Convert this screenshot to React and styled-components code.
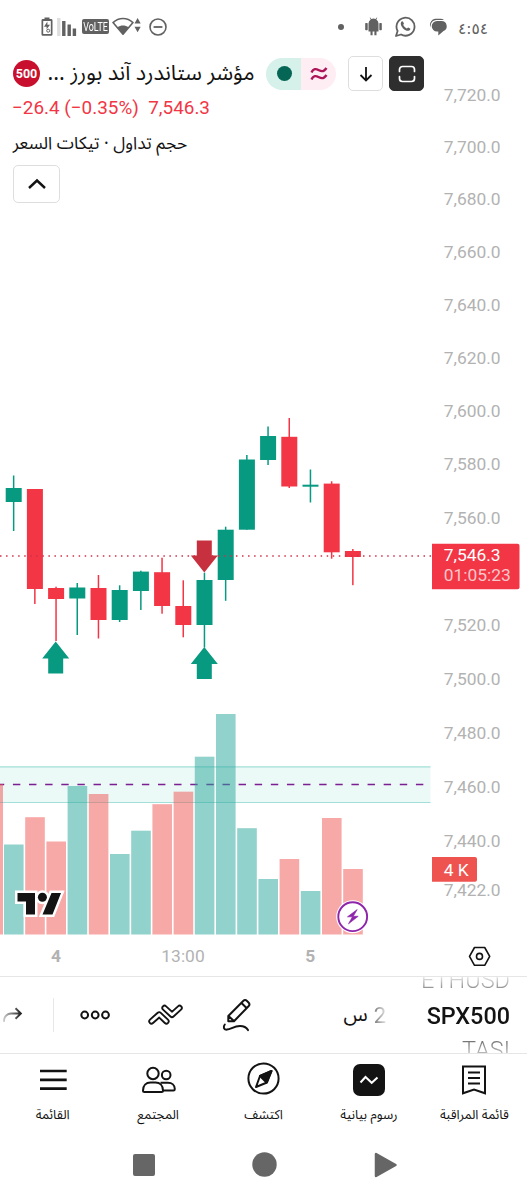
import React from "react";
import styled, { createGlobalStyle } from "styled-components";


const GlobalStyle = createGlobalStyle`
  * {
    box-sizing: border-box;
  }

  body {
    margin: 0;
    background: #ffffff;
    font-family: Roboto, "DejaVu Sans", sans-serif;
    color: #131313;
  }

  svg {
    display: block;
    flex: none;
  }
`;


/* candle: [up, high, bodyTop, bodyBottom, low] */
const candles = [
  [true, 475.5, 488, 502, 531],
  [false, 489, 489, 589, 604],
  [false, 586.7, 588, 599, 641],
  [true, 583, 587.5, 598.5, 635],
  [false, 575, 588, 620, 638.5],
  [true, 585.3, 590, 620, 622],
  [true, 570.7, 571.6, 591, 610],
  [false, 557.7, 572.2, 606, 613.7],
  [false, 580.3, 606, 625, 637.3],
  [true, 572.7, 580, 625, 647.5],
  [true, 526.7, 529.7, 580, 600.8],
  [true, 455, 459.5, 529.7, 529.7],
  [true, 426.5, 436, 460, 465],
  [false, 418, 436.8, 486.5, 488],
  [true, 469.5, 484.7, 486.7, 502.5],
  [false, 481.3, 483.6, 552.3, 558.7],
  [false, 549, 551, 557, 585.2],
];

const volumes = [
  844.5, 817.2, 841.5, 786, 794, 854, 830.7, 804.2, 791.7,
  756.7, 714, 828.2, 879, 859, 891, 818, 869,
];

const volumeUp = [
  true, false, false, true, false, true, true, false, false,
  true, true, true, true, false, true, false, false,
];

const prices = [
  ["7,720.0", 94.7], ["7,700.0", 146.7], ["7,680.0", 199.2], ["7,660.0", 252],
  ["7,640.0", 305.2], ["7,620.0", 358], ["7,600.0", 411.2], ["7,580.0", 464],
  ["7,560.0", 517.7], ["7,520.0", 625.2], ["7,500.0", 679], ["7,480.0", 732.7],
  ["7,460.0", 786.7], ["7,440.0", 841], ["7,422.0", 890],
];

const CHART_TOP = 50;
const candleX = i => 13.6 + i * 21.2;


const Screen = styled.div`
  width: 527px;
  height: 1200px;
  overflow: hidden;
  display: flex;
  flex-direction: column;
`;

const StatusBar = styled.div`
  height: 50px;
  padding: 3px 40px 0 41px;
  display: flex;
  align-items: center;
  justify-content: space-between;
  color: #616161;
`;

const StatusGroup = styled.div`
  display: flex;
  align-items: center;
`;

const Gap = styled.span`
  width: ${props => props.size}px;
`;

const VoLte = styled.span`
  width: 27px;
  height: 15px;
  border-radius: 2px;
  background: #616161;
  color: #ffffff;
  display: flex;
  justify-content: center;
  line-height: 16px;

  & span {
    font-size: 12px;
    transform: scaleX(0.74);
  }
`;

const Clock = styled.span`
  width: 29px;
  padding-top: 5px;
  font-family: "DejaVu Sans", sans-serif;
  font-size: 15.5px;
  white-space: nowrap;
  direction: ltr;
  unicode-bidi: bidi-override;
`;

const ChartPane = styled.main`
  height: 926px;
  display: grid;
  grid-template: 926px / 527px;

  & > * {
    grid-area: 1 / 1;
  }
`;

const Legend = styled.section`
  z-index: 1;
  padding: 4px 0 0 12px;
  display: flex;
  flex-direction: column;
  align-items: flex-start;
  align-self: start;
`;

const TitleRow = styled.div`
  height: 39px;
  display: flex;
  align-items: center;
`;

const SymbolBadge = styled.span`
  width: 27px;
  height: 27px;
  margin-left: 1px;
  border-radius: 50%;
  background: #c8102e;
  color: #ffffff;
  font-size: 12.5px;
  font-weight: 700;
  line-height: 27px;
  text-align: center;
`;

const Arabic = styled.span`
  display: inline-flex;
  justify-content: center;
  direction: rtl;
  width: ${props => props.width}px;
  height: ${props => props.size * 1.5}px;
  line-height: ${props => props.size * 1.5}px;
  font-family: "Noto Sans Arabic", "Noto Sans", "DejaVu Sans", sans-serif;
  font-size: ${props => props.size}px;
  white-space: nowrap;
`;

const StatePill = styled.div`
  width: 70px;
  height: 32px;
  margin-left: 11px;
  border-radius: 16px;
  overflow: hidden;
  display: flex;
`;

const PillHalf = styled.span`
  flex: 1;
  display: flex;
  align-items: center;
  justify-content: center;
  background: ${props => props.tint};
`;

const MarketDot = styled.span`
  width: 15px;
  height: 15px;
  margin-left: 2px;
  border-radius: 50%;
  background: #056656;
`;

const SquareButton = styled.button`
  width: 35px;
  height: 35px;
  margin: 0 0 0 ${props => props.gap}px;
  padding: 0;
  border: 1px solid ${props => props.dark ? '#2e2e2e' : '#dedede'};
  border-radius: 5px;
  background: ${props => props.dark ? '#2e2e2e' : '#ffffff'};
  display: flex;
  align-items: center;
  justify-content: center;
`;

const QuoteLine = styled.div`
  height: 30px;
  color: #f23645;
  font-size: 18.9px;
  line-height: 29px;
  white-space: pre;
`;

const Indicator = styled.div`
  height: 42px;
  padding-left: 1px;
  display: flex;
  align-items: center;
`;

const CollapseButton = styled(SquareButton)`
  width: 47px;
  height: 38px;
  margin: 0 0 0 1px;
`;

const Toolbar = styled.div`
  height: 78px;
  border-top: 1px solid #e6e6e6;
  border-bottom: 1px solid #e6e6e6;
  padding-right: 17px;
  display: flex;
  align-items: center;
  overflow: hidden;
`;

const Divider = styled.span`
  width: 1px;
  height: 34px;
  background: #e8e8e8;
`;

const Interval = styled.div`
  width: 42px;
  direction: rtl;
  display: flex;
  align-items: center;
  gap: 8px;
  font-size: 22px;

  & .count {
    background: linear-gradient(to right, #777777, #e4e4e4);
    background-clip: text;
    color: transparent;
  }
`;

const SymbolWheel = styled.div`
  margin-left: auto;
  display: flex;
  flex-direction: column;
  align-items: flex-end;
`;

const WheelItem = styled.span`
  height: 35px;
  line-height: ${props => props.active ? 36 : 35}px;
  font-size: ${props => props.active ? 23.4 : 23.5}px;
  font-weight: ${props => props.active ? 500 : 300};
  background: ${props => props.fade};
  background-clip: text;
  color: transparent;
`;

const TabBar = styled.nav`
  height: 78px;
  display: flex;
`;

const Tab = styled.div`
  flex: 1;
  display: flex;
  flex-direction: column;
  align-items: center;
  gap: 8px;
  padding-top: 8px;
`;

const SystemBar = styled.footer`
  height: 65px;
  display: flex;
  align-items: center;
  justify-content: center;
  padding-left: 2px;
  gap: 97px;
`;


const StatusIcons = () => (
  <StatusGroup>
    <svg width="12" height="20" viewBox="0 0 12 20">
      <path d="M3.5 2V0.5h5V2h1.6a1.4 1.4 0 0 1 1.4 1.4v14a1.4 1.4 0 0 1-1.4 1.4H1.9A1.4 1.4 0 0 1 .5 17.4v-14A1.4 1.4 0 0 1 1.9 2z" fill="#616161"/>
      <rect x="2.2" y="4" width="7.6" height="13" fill="#fff"/>
      <path d="M6.4 4.5 3 9.7h2.6v2.6L9 7.8H6.4z" fill="#616161"/>
      <circle cx="7.2" cy="13.7" r="1.5" fill="none" stroke="#616161"/>
    </svg>
    <Gap size={4}/>
    <svg width="20" height="19" viewBox="0 0 20 19">
      <path d="M1.8 1v18" stroke="#dedede" strokeWidth="3.4"/>
      <path d="M6.8 4v15M12.2 7.5V19M17.4 11.5V19" stroke="#616161" strokeWidth="3.4"/>
    </svg>
    <Gap size={5}/>
    <VoLte><span>VoLTE</span></VoLte>
    <Gap size={3}/>
    <svg width="29" height="19" viewBox="0 0 29 19">
      <path d="M1 5.6C6.8.2 15.2.2 21 5.6L11 17.2z" fill="none" stroke="#616161" strokeWidth="1.6" strokeLinejoin="round"/>
      <path d="M5.5 10.2c3.3-2.3 7.7-2.3 11 0L11 17.5z" fill="#616161"/>
      <path d="M22.5 6.4h6.2L25.6 1zM22.5 9.8h6.2l-3.1 5.4z" fill="#616161"/>
    </svg>
    <Gap size={8}/>
    <svg width="18" height="18" viewBox="0 0 18 18" fill="none" stroke="#616161" strokeWidth="1.6">
      <circle cx="9" cy="9" r="8"/>
      <path d="M4.6 9h8.8" strokeWidth="1.8"/>
    </svg>
  </StatusGroup>
);

const NotificationIcons = () => (
  <StatusGroup>
    <svg width="6" height="6" viewBox="0 0 6 6"><circle cx="3" cy="3" r="3" fill="#616161"/></svg>
    <Gap size={21}/>
    <svg width="17" height="19" viewBox="0 0 17 19" fill="#616161">
      <path d="M3.5 6.4a5 5 0 0 1 2.2-4L4.7.8l.5-.4 1.2 1.5a5.5 5.500 0 0 1 4.2 0L11.8.4l.5.4-1 1.600a5 5 0 0 1 2.200 4zM3.500 6.400h10v8.100h-2v3.800H9.400v-3.800H7.600v3.800H5.500v-3.800h-2z"/>
      <rect x="0.200" y="6" width="2.500" height="7.300" rx="0.700"/>
      <rect x="14.300" y="6" width="2.500" height="7.300" rx="0.700"/>
    </svg>
    <Gap size={13}/>
    <svg width="21" height="21" viewBox="0 0 21 21">
      <path d="M1 20l1.600-5A9 9 0 1 1 6 18.500z" fill="none" stroke="#616161" strokeWidth="1.800" strokeLinejoin="round"/>
      <path d="M6.200 5.800c.8-.9 1.600-.8 2 .1l.7 1.600c.2.500-.8 1.200-.7 1.600a8 8 0 0 0 3.500 3.300c.6.200 1-1.100 1.500-1l1.900 1c.7.400-.1 1.800-1 2.200-1.600.7-4.200-.4-6-2.200S5 8 6.200 5.800z" fill="#616161"/>
    </svg>
    <Gap size={13}/>
    <svg width="18" height="18" viewBox="0 0 18 18">
      <path d="M1 7.500A6 6 0 0 1 6 .8h5.500a5 5 0 0 1 3.500 1.300H7.500A5.800 5.800 0 0 0 2.300 10.500z" fill="#616161"/>
      <path d="M8 3h4.500a5.200 5.200 0 0 1 2 10L9.300 17.600v-4.100H8A5.200 5.200 0 0 1 8 3z" fill="#616161"/>
    </svg>
    <Gap size={11}/>
    <Clock>٤:٥٤</Clock>
  </StatusGroup>
);


const Marker = ({ x, y, down }) => (
  <path
    transform={`translate(${x} ${y})${down ? ' scale(1 -1)' : ''}`}
    d="M0 0 13.500 17H7.500V32H-7.500V17H-13.500z"
    fill={down ? '#c7313f' : '#089981'}
  />
);

const PriceChart = () => (
  <svg width="527" height="926" viewBox={`0 ${CHART_TOP} 527 926`}>
    <rect x="0" y="767" width="430.500" height="35.500" fill="#ebf9f7"/>
    <path d="M0 766.800H430.500M0 802.500H430.500" stroke="#a3dfd9" strokeWidth="1.200"/>
    <path d="M-3.200 784.500H428" stroke="#7b1f93" strokeWidth="1.300" strokeDasharray="7.400 8.720"/>

    <rect x="0" y="784" width="3" height="150.500" fill="#ef5350" fillOpacity="0.500"/>
    {volumes.map((top, i) => (
      <rect
        key={i}
        x={candleX(i) - 9.600}
        y={top}
        width="19.600"
        height={934.500 - top}
        fill={volumeUp[i] ? '#26a69a' : '#ef5350'}
        fillOpacity="0.500"
      />
    ))}

    {candles.map(([up, high, top, bottom, low], i) => (
      <g key={i} fill={up ? '#089981' : '#f23645'}>
        <rect x={candleX(i) - 0.700} y={high} width="1.500" height={low - high}/>
        <rect x={candleX(i) - 7.900} y={top} width="16" height={bottom - top}/>
      </g>
    ))}
    <path d="M0 556H431" stroke="#d0304a" strokeWidth="1.500" strokeDasharray="1.500 4.550"/>

    <Marker x={55.700} y={641.500}/>
    <Marker x={204.300} y={647}/>
    <Marker x={204.300} y={572.500} down/>

    <g fill="#b2b2b2" fontSize="17.400">
      {prices.map(([label, y]) => <text key={label} x="443.700" y={y + 6.200}>{label}</text>)}
      <text x="56" y="962.300" textAnchor="middle" fontWeight="700">4</text>
      <text x="183" y="962.300" textAnchor="middle">13:00</text>
      <text x="310.300" y="962.300" textAnchor="middle" fontWeight="700">5</text>
    </g>

    <path d="M432 543.700h85.500a2 2 0 0 1 2 2v41.500a2 2 0 0 1-2 2H432z" fill="#f23645"/>
    <text x="443.700" y="560.700" fill="#fff" fontSize="17.400">7,546.3</text>
    <text x="443.700" y="581.300" fill="#fbc6ca" fontSize="17.400">01:05:23</text>
    <path d="M432 857h43a2 2 0 0 1 2 2v20.700a2 2 0 0 1-2 2H432z" fill="#ef5350"/>
    <text x="443.700" y="875.700" fill="#fff" fontSize="17.400">4 K</text>

    <g stroke="#fff" strokeWidth="5" fill="#131313">
      <path d="M17.500 893H35v21.500H26V901.500H17.500zM51.500 893H61l-8.500 21.500H42.500z"/>
      <circle cx="42.400" cy="897.200" r="4.500"/>
    </g>
    <path d="M17.500 893H35v21.500H26V901.500H17.500zM51.500 893H61l-8.500 21.500H42.500z" fill="#131313"/>
    <circle cx="42.400" cy="897.200" r="4.500" fill="#131313"/>

    <circle cx="352.700" cy="916.700" r="16.500" fill="#fff"/>
    <circle cx="352.700" cy="916.700" r="14.400" fill="#fff" stroke="#8e24aa" strokeWidth="1.900"/>
    <path d="M357.200 909.600 347.500 916.800h5L348.500 923.800 358.200 916.300h-5z" fill="#8e24aa" stroke="#8e24aa" strokeWidth="0.700" strokeLinejoin="round"/>

    <g fill="none" stroke="#131313" strokeWidth="1.600" strokeLinejoin="round">
      <path d="M474.500 947.500h10.200l5 8.900-5 8.900h-10.200l-5-8.900z"/>
      <circle cx="479.500" cy="956.400" r="3"/>
    </g>
  </svg>
);


const RedoIcon = () => (
  <svg width="24" height="24" viewBox="0 0 24 24" fill="none" strokeWidth="1.900">
    <defs>
      <linearGradient id="redoFade" gradientUnits="userSpaceOnUse" x1="3" y1="0" x2="20" y2="0">
        <stop stopColor="#d0d0d0"/>
        <stop offset="1" stopColor="#2a2a2a"/>
      </linearGradient>
    </defs>
    <path d="M4 18.700v-1.500A7 7 0 0 1 11 10.500H20.500M15.500 5.200l5.400 5.300-5.400 5.300" stroke="url(#redoFade)"/>
  </svg>
);

const DotsIcon = () => (
  <svg width="30" height="12" viewBox="0 0 30 12" fill="none" stroke="#131313" strokeWidth="2">
    <circle cx="4.700" cy="6" r="3.400"/>
    <circle cx="15.200" cy="6" r="3.400"/>
    <circle cx="25.500" cy="6" r="3.400"/>
  </svg>
);

/* two interlocked chevron ribbons */
const IndicatorsIcon = () => (
  <svg width="36" height="24" viewBox="0 0 36 24" fill="none" strokeLinecap="round" strokeLinejoin="round">
    <path d="M4.500 18.300 12.200 11.500 19.400 18.300M17.600 5 25 11.800 32.500 5" stroke="#131313" strokeWidth="6.400"/>
    <path d="M4.500 18.300 12.200 11.500 19.400 18.300M17.600 5 25 11.800 32.500 5" stroke="#fff" strokeWidth="2.700"/>
  </svg>
);

const DrawIcon = () => (
  <svg width="30" height="34" viewBox="0 0 30 34" fill="none" stroke="#131313" strokeWidth="2" strokeLinejoin="round" strokeLinecap="round">
    <path d="M7.300 18 22.200 3a2.700 2.700 0 0 1 3.800 0l1.500 1.500a2.700 2.700 0 0 1 0 3.800L13 23.200H7.300zM7.500 18l5.400 5M20.500 5l5 5"/>
    <path d="M3.800 26.500C2.200 28.500 2.300 32 6 31.600c4-.4 7-3.500 13-3.500 3.500 0 6.500 1.500 8 4"/>
  </svg>
);

const MenuIcon = () => (
  <svg width="36" height="36" viewBox="0 0 36 36" stroke="#131313" strokeWidth="2.700">
    <path d="M5 9H31.700M5 17.800H31.700M5 26.600H31.700"/>
  </svg>
);

const CommunityIcon = () => (
  <svg width="36" height="36" viewBox="0 0 36 36" fill="none" stroke="#131313" strokeWidth="2" strokeLinejoin="round">
    <circle cx="13" cy="11.500" r="5.700"/>
    <circle cx="26.200" cy="13" r="4.300"/>
    <path d="M3 28.500c0-5 3-8 7.500-8h5c4.500 0 7.500 3 7.500 8 0 1-.6 1.500-1.500 1.500h-17c-.9 0-1.500-.5-1.500-1.500z"/>
    <path d="M20.500 20.800h7.500c4 0 6.800 2.500 6.800 6.200 0 1-.5 1.500-1.400 1.500H23"/>
  </svg>
);

const ExploreIcon = () => (
  <svg width="36" height="36" viewBox="0 0 36 36" fill="none" stroke="#131313" strokeWidth="2" strokeLinejoin="round">
    <circle cx="17.500" cy="16.500" r="15.100"/>
    <path d="M25.500 9 14 14 10 25l11-4.500z"/>
    <path d="M25.500 9 14 14l6.500 6.500z" fill="#131313"/>
  </svg>
);

const ChartTabIcon = () => (
  <svg width="36" height="36" viewBox="0 0 36 36">
    <rect x="2" y="2" width="32" height="32" rx="7" fill="#131313"/>
    <path d="M9.500 20.500 14.500 15 20.700 20.800 26.500 15.500" fill="none" stroke="#fff" strokeWidth="2"/>
  </svg>
);

const WatchlistIcon = () => (
  <svg width="36" height="36" viewBox="0 0 36 36" fill="none" stroke="#131313" strokeWidth="2">
    <path d="M7 4.500H29V31.300L18 27.500 7 31.300zM12 10.500H24M12 16H24M12 21.500H24"/>
  </svg>
);


const tabs = [
  ["القائمة", 33, MenuIcon],
  ["المجتمع", 40, CommunityIcon],
  ["اكتشف", 36, ExploreIcon],
  ["رسوم بيانية", 62, ChartTabIcon],
  ["قائمة المراقبة", 70, WatchlistIcon],
];


const App = () => (
  <Screen>
    <GlobalStyle/>

    <StatusBar>
      <StatusIcons/>
      <NotificationIcons/>
    </StatusBar>

    <ChartPane>
      <PriceChart/>
      <Legend>
        <TitleRow>
          <SymbolBadge>500</SymbolBadge>
          <Gap size={7}/>
          <Arabic width={208} size={21.6}>مؤشر ستاندرد آند بورز ...</Arabic>
          <StatePill>
            <PillHalf tint="#d6f0ea"><MarketDot/></PillHalf>
            <PillHalf tint="#ffedf4">
              <svg width="18" height="14" viewBox="0 0 18 14" fill="none" stroke="#ad1457" strokeWidth="2.400">
                <path d="M1.500 5.500c2-4.500 4.500-3.800 7.500-2.200s5 1.500 7.500-2.300M1.500 12.500C3.500 8 6 8.700 9 10.300s5 1.500 7.500-2.300"/>
              </svg>
            </PillHalf>
          </StatePill>
          <SquareButton gap={12}>
            <svg width="16" height="18" viewBox="0 0 16 18" fill="none" stroke="#131313" strokeWidth="1.800">
              <path d="M8 2v13.500M2.500 10l5.500 5.500 5.500-5.500"/>
            </svg>
          </SquareButton>
          <SquareButton gap={6} dark>
            <svg width="18" height="18" viewBox="0 0 18 18" fill="none" stroke="#fff" strokeWidth="1.700" strokeLinecap="round">
              <path d="M1.500 6.500V4.500A3 3 0 0 1 4.500 1.500h9a3 3 0 0 1 3 3v2M1.500 11.500v2a3 3 0 0 0 3 3h9a3 3 0 0 0 3-3v-2"/>
            </svg>
          </SquareButton>
        </TitleRow>
        <QuoteLine>−26.4 (−0.35%)  7,546.3</QuoteLine>
        <Indicator><Arabic width={174} size={17.4}>حجم تداول · تيكات السعر</Arabic></Indicator>
        <CollapseButton>
          <svg width="18" height="12" viewBox="0 0 18 12" fill="none" stroke="#131313" strokeWidth="2.400">
            <path d="M1 10 9 2.500l8 7.500"/>
          </svg>
        </CollapseButton>
      </Legend>
    </ChartPane>

    <Toolbar>
      <RedoIcon/>
      <Gap size={29}/>
      <Divider/>
      <Gap size={26}/>
      <DotsIcon/>
      <Gap size={37}/>
      <IndicatorsIcon/>
      <Gap size={38}/>
      <DrawIcon/>
      <Gap size={93}/>
      <Interval><span className="count">2</span><Arabic width={20} size={20}>س</Arabic></Interval>
      <SymbolWheel>
        <WheelItem fade="linear-gradient(#ffffff 30%, #8a8a8a 75%)">ETHUSD</WheelItem>
        <WheelItem active fade="#131313">SPX500</WheelItem>
        <WheelItem fade="linear-gradient(#777777 25%, #dddddd 75%)">TASI</WheelItem>
      </SymbolWheel>
    </Toolbar>

    <TabBar>
      {tabs.map(([label, width, Icon]) => (
        <Tab key={label}>
          <Icon/>
          <Arabic width={width} size={13}>{label}</Arabic>
        </Tab>
      ))}
    </TabBar>

    <SystemBar>
      <svg width="22" height="22" viewBox="0 0 22 22"><rect width="22" height="22" rx="2" fill="#666"/></svg>
      <svg width="25" height="25" viewBox="0 0 25 25"><circle cx="12.500" cy="12.500" r="12.200" fill="#666"/></svg>
      <svg width="23" height="26" viewBox="0 0 23 26">
        <path d="M2 2v22L21.500 13z" fill="#666" stroke="#666" strokeWidth="2.500" strokeLinejoin="round"/>
      </svg>
    </SystemBar>
  </Screen>
);

export default App;
